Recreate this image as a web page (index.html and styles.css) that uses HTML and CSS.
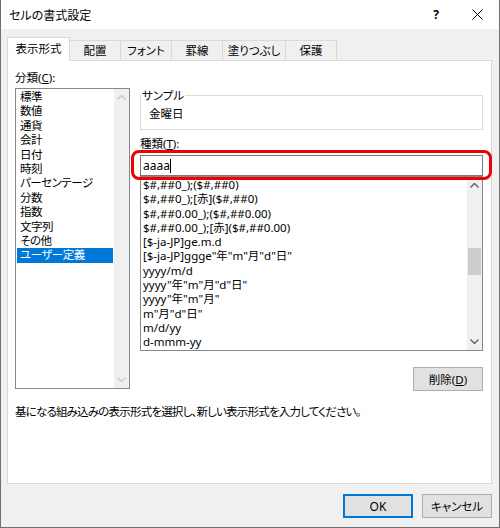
FILE: index.html
```html
<!DOCTYPE html>
<html lang="ja">
<head>
    <meta charset="UTF-8">
    <title>セルの書式設定</title>
    <link rel="stylesheet" href="styles.css">
</head>
<body>
    <div class="window">
        <div class="titlebar">
            <span class="title">セルの書式設定</span>
            <span class="help">?</span>
            <span class="close">
                <svg width="11" height="11" viewBox="0 0 11 11"><path d="M0.5 0.5 L10.5 10.5 M10.5 0.5 L0.5 10.5" stroke="#000" stroke-width="1" fill="none"/></svg>
            </span>
        </div>

        <div class="content">
            <div class="tabs">
                <div class="tab wide active">表示形式</div>
                <div class="tab">配置</div>
                <div class="tab">フォント</div>
                <div class="tab">罫線</div>
                <div class="tab wide">塗りつぶし</div>
                <div class="tab">保護</div>
            </div>

            <div class="panel">
                <div class="panel-main">
                    <!-- 分類 -->
                    <div class="category">
                        <div class="label">分類(<u>C</u>):</div>
                        <div class="listbox category-list">
                            <ul class="items">
                                <li>標準</li>
                                <li>数値</li>
                                <li>通貨</li>
                                <li>会計</li>
                                <li>日付</li>
                                <li>時刻</li>
                                <li>パーセンテージ</li>
                                <li>分数</li>
                                <li>指数</li>
                                <li>文字列</li>
                                <li>その他</li>
                                <li class="selected">ユーザー定義</li>
                            </ul>
                            <div class="scrollbar disabled">
                                <svg class="arrow" width="9" height="5" viewBox="0 0 9 5"><path d="M0.5 4.5 L4.5 0.5 L8.5 4.5" fill="none" stroke="#c8c8c8" stroke-width="1.4"/></svg>
                                <div class="track"></div>
                                <svg class="arrow" width="9" height="5" viewBox="0 0 9 5"><path d="M0.5 0.5 L4.5 4.5 L8.5 0.5" fill="none" stroke="#c8c8c8" stroke-width="1.4"/></svg>
                            </div>
                        </div>
                    </div>

                    <!-- サンプルと種類 -->
                    <div class="detail">
                        <fieldset class="sample">
                            <legend>サンプル</legend>
                            <div class="sample-value">金曜日</div>
                        </fieldset>

                        <div class="label type-label">種類(<u>T</u>):</div>
                        <div class="type-input">
                            <span>aaaa</span><span class="caret"></span>
                            <div class="highlight"></div>
                        </div>

                        <div class="listbox type-list">
                            <ul class="items">
                                <li>$#,##0_);($#,##0)</li>
                                <li>$#,##0_);[赤]($#,##0)</li>
                                <li>$#,##0.00_);($#,##0.00)</li>
                                <li>$#,##0.00_);[赤]($#,##0.00)</li>
                                <li>[$-ja-JP]ge.m.d</li>
                                <li>[$-ja-JP]ggge"年"m"月"d"日"</li>
                                <li>yyyy/m/d</li>
                                <li>yyyy"年"m"月"d"日"</li>
                                <li>yyyy"年"m"月"</li>
                                <li>m"月"d"日"</li>
                                <li>m/d/yy</li>
                                <li>d-mmm-yy</li>
                            </ul>
                            <div class="scrollbar">
                                <svg class="arrow" width="9" height="5" viewBox="0 0 9 5"><path d="M0.5 4.5 L4.5 0.5 L8.5 4.5" fill="none" stroke="#606060" stroke-width="1.4"/></svg>
                                <div class="track"><div class="thumb"></div></div>
                                <svg class="arrow" width="9" height="5" viewBox="0 0 9 5"><path d="M0.5 0.5 L4.5 4.5 L8.5 0.5" fill="none" stroke="#606060" stroke-width="1.4"/></svg>
                            </div>
                        </div>

                        <div class="delete-row">
                            <button class="btn delete">削除(<u>D</u>)</button>
                        </div>
                    </div>
                </div>

                <p class="hint">基になる組み込みの表示形式を選択し、新しい表示形式を入力してください。</p>
            </div>

            <div class="footer">
                <button class="btn ok">OK</button>
                <button class="btn">キャンセル</button>
            </div>
        </div>
    </div>
</body>
</html>
```

FILE: styles.css
```css
body {
    margin: 0;
    font-family: "Noto Sans", "Noto Sans CJK JP", sans-serif;
    font-size: 11.5px;
    font-feature-settings: "palt";
    color: #000;
    background: #fff;
}

.window {
    width: 500px;
    height: 528px;
    box-sizing: border-box;
    border: 1px solid #6f6f6f;
    border-top: none;
    display: flex;
    flex-direction: column;
}

/* タイトルバー */
.titlebar {
    height: 29px;
    background: #fff;
    display: flex;
    align-items: center;
    padding-left: 8px;
    font-size: 12px;
}

.title {
    flex: 1;
}

.help {
    font-weight: bold;
    margin-right: 33px;
}

.close {
    display: flex;
    margin-right: 16px;
}

/* 本体 */
.content {
    flex: 1;
    background: #f0f0f0;
    padding: 8px 7px 9px 6px;
    display: flex;
    flex-direction: column;
}

/* タブ */
.tabs {
    display: flex;
    align-items: flex-end;
    height: 23px;
}

.tab {
    width: 51px;
    height: 20px;
    line-height: 19px;
    box-sizing: border-box;
    text-align: center;
    border: 1px solid #d9d9d9;
    border-bottom: none;
    border-left: none;
    background: #f0f0f0;
}

.tab.wide {
    width: 63px;
}

.tab.active {
    height: 24px;
    line-height: 22px;
    margin-bottom: -1px;
    border-left: 1px solid #d9d9d9;
    background: #fff;
    position: relative;
    z-index: 1;
}

/* パネル */
.panel {
    height: 424px;
    box-sizing: border-box;
    border: 1px solid #d9d9d9;
    background: #fff;
    padding: 9px 7px 0 7px;
}

.panel-main {
    display: flex;
    gap: 10px;
}

.label {
    line-height: 15px;
}

.listbox {
    display: flex;
    box-sizing: border-box;
    border: 1px solid #828790;
    background: #fff;
    overflow: hidden;
}

.items {
    list-style: none;
    margin: 0;
    padding: 1px;
    flex: 1;
    white-space: nowrap;
    overflow: hidden;
}

.category-list {
    margin-top: 3px;
    width: 115px;
    height: 301px;
}

.category-list .items li {
    line-height: 14.4px;
    padding-left: 3px;
    letter-spacing: -0.5px;
}

.category-list .items li.selected {
    background: #0078d7;
    color: #fff;
}

.scrollbar {
    width: 15px;
    background: #f0f0f0;
    display: flex;
    flex-direction: column;
    align-items: center;
}

.scrollbar .arrow {
    margin: 6px 0;
}

.scrollbar .track {
    flex: 1;
    width: 100%;
}

.thumb {
    margin: 54px 1px 0 1px;
    height: 27px;
    background: #cdcdcd;
}

/* 右側 */
.detail {
    flex: 1;
    padding-top: 18px;
    padding-right: 1px;
}

.sample {
    margin: 0;
    padding: 3px 8px 8px 8px;
    border: 1px solid #dcdcdc;
}

.sample legend {
    padding: 0 1px;
    margin-left: -8px;
    line-height: 15px;
}

.sample-value {
    line-height: 15px;
}

.type-label {
    margin-top: 6px;
}

.type-input {
    position: relative;
    margin-top: 4px;
    height: 21px;
    box-sizing: border-box;
    border: 1px solid #7a7a7a;
    padding-left: 2px;
    line-height: 19px;
    font-size: 12px;
    display: flex;
    align-items: center;
}

.caret {
    width: 1px;
    height: 14px;
    background: #000;
}

/* 赤い枠 */
.highlight {
    position: absolute;
    top: -6px;
    bottom: -5px;
    left: -10px;
    right: -10px;
    border: 3px solid #f00000;
    border-radius: 8px;
}

.type-list {
    height: 175px;
}

.type-list .items {
    padding: 1px 2px;
}

.type-list .items li {
    line-height: 14.3px;
}

.delete-row {
    display: flex;
    justify-content: flex-end;
    margin-top: 16px;
}

.btn {
    font-family: inherit;
    font-size: 11.5px;
    font-feature-settings: "palt";
    width: 70px;
    height: 24px;
    padding: 0;
    background: #e1e1e1;
    border: 1px solid #adadad;
    color: #000;
}

.hint {
    margin: 13px 0 0 0;
    line-height: 15px;
    letter-spacing: -0.8px;
}

.footer {
    display: flex;
    justify-content: flex-end;
    gap: 9px;
    margin-top: 10px;
}

.btn.ok {
    font-size: 12px;
    border: 1px solid #0078d7;
    box-shadow: inset 0 0 0 1px #0078d7;
}
```
